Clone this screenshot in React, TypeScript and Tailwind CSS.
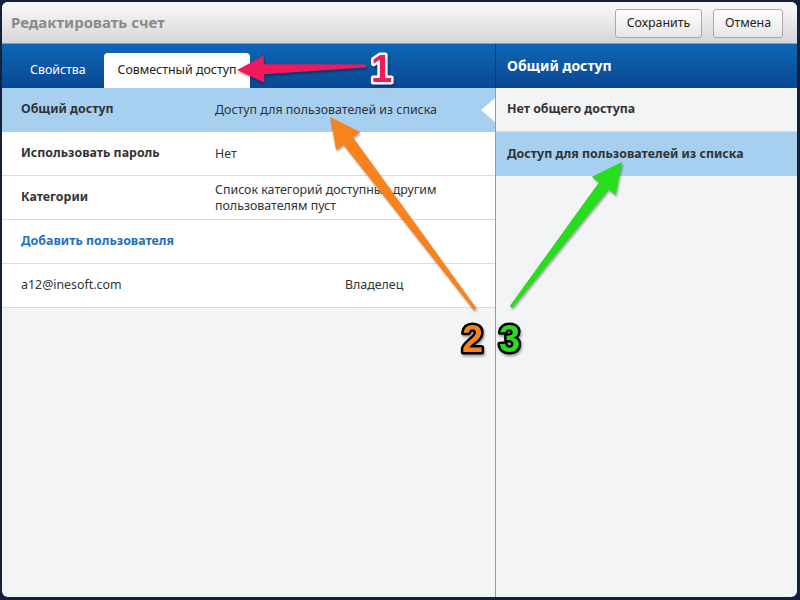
import React from 'react';

type Pt = [number, number];

// tapered annotation arrow: thin tail, wide head
function arrowPoints(tip: Pt, tail: Pt, headLen: number, headW: number, neckW: number, tailW: number) {
  const dx = tail[0] - tip[0];
  const dy = tail[1] - tip[1];
  const len = Math.hypot(dx, dy);
  const ux = dx / len;
  const uy = dy / len;
  const nx = -uy;
  const ny = ux;
  const bx = tip[0] + ux * headLen;
  const by = tip[1] + uy * headLen;
  const pts: Pt[] = [
    tip,
    [bx + nx * headW / 2, by + ny * headW / 2],
    [bx + nx * neckW / 2, by + ny * neckW / 2],
    [tail[0] + nx * tailW / 2, tail[1] + ny * tailW / 2],
    [tail[0] - nx * tailW / 2, tail[1] - ny * tailW / 2],
    [bx - nx * neckW / 2, by - ny * neckW / 2],
    [bx - nx * headW / 2, by - ny * headW / 2],
  ];
  return pts.map((p) => p.join(',')).join(' ');
}

const leftRows = [
  { label: 'Общий доступ', value: 'Доступ для пользователей из списка', active: true },
  { label: 'Использовать пароль', value: 'Нет' },
  { label: 'Категории', value: 'Список категорий доступных другим пользователям пуст' },
];

export default function App() {
  return (
    <div className="relative w-[800px] h-[600px] bg-[#13223a] pt-[2px] pl-[2px] pr-[3px] pb-[3px] overflow-hidden" style={{ fontFamily: '"Noto Sans", "Open Sans", sans-serif' }}>
      <div className="flex flex-col h-full rounded-[6px] overflow-hidden bg-[#f3f4f6]">
        {/* title bar */}
        <div className="h-[42px] flex items-center justify-between pl-[9px] pr-[14px] bg-gradient-to-b from-[#fbfbfb] to-[#d6d6d8] border-b border-[#9a9ea4]">
          <div className="text-[15px] font-bold text-[#8a8a8a]">Редактировать счет</div>
          <div className="flex gap-[11px] pt-[1px]">
            <button className="h-[29px] w-[87px] text-[12.4px] text-[#222] rounded-[3px] border border-[#a9a9a9] bg-gradient-to-b from-white to-[#e6e6e6]">Сохранить</button>
            <button className="h-[29px] w-[70px] text-[12.4px] text-[#222] rounded-[3px] border border-[#a9a9a9] bg-gradient-to-b from-white to-[#e6e6e6]">Отмена</button>
          </div>
        </div>

        {/* blue header */}
        <div className="h-[44px] flex bg-gradient-to-b from-[#0e66b6] to-[#0a4893]">
          <div className="w-[493px] flex items-end pl-[28px]">
            <div className="h-[35px] w-[74px] flex items-center text-[12.4px] text-white">Свойства</div>
            <div className="h-[35px] w-[146px] flex items-center justify-center rounded-t-[4px] bg-white text-[12.4px] text-[#222]">Совместный доступ</div>
          </div>
          <div className="w-px bg-[#0a3a72]" />
          <div className="flex-1 flex items-center pl-[11px] pb-[2px] text-[14px] font-bold text-white">Общий доступ</div>
        </div>

        <div className="flex-1 flex">
          {/* left panel */}
          <div className="w-[493px] flex flex-col">
            {leftRows.map((r) => (
              <div key={r.label} className={`relative h-[44px] flex items-center border-b ${r.active ? 'bg-[#a6cff0] border-[#a6cff0]' : 'bg-white border-[#dcdcdc]'}`}>
                <div className="w-[213px] pl-[19px] text-[12.4px] font-bold text-[#333]">{r.label}</div>
                <div className="w-[236px] text-[12.4px] leading-[16px] text-[#333]">{r.value}</div>
                {r.active && (
                  <div className="absolute right-0 top-[10px] w-0 h-0 border-y-[12px] border-y-transparent border-r-[14px] border-r-white" />
                )}
              </div>
            ))}
            <div className="h-[44px] flex items-center pl-[19px] bg-white border-b border-[#dcdcdc] text-[12.4px] font-bold text-[#1f6fbf]">Добавить пользователя</div>
            <div className="h-[44px] flex items-center bg-white border-b border-[#dcdcdc] text-[12.4px] text-[#333]">
              <div className="w-[343px] pl-[19px]">a12@inesoft.com</div>
              <div>Владелец</div>
            </div>
          </div>
          <div className="w-px bg-[#9a9a9a]" />
          {/* right panel */}
          <div className="flex-1 flex flex-col">
            <div className="h-[44px] flex items-center pl-[11px] border-b border-[#dcdcdc] text-[12.4px] font-bold text-[#333]">Нет общего доступа</div>
            <div className="h-[44px] flex items-center pl-[11px] bg-[#a6cff0] text-[12.4px] font-bold text-[#333]">Доступ для пользователей из списка</div>
          </div>
        </div>
      </div>

      {/* annotations */}
      <svg className="absolute inset-0 pointer-events-none" width="800" height="600" style={{ filter: 'drop-shadow(1px 2px 1px rgba(0,0,0,0.35))' }}>
        <polygon points={arrowPoints([237, 70], [366, 66], 27, 27, 10, 3)} fill="#f2185c" />
        <polygon points={arrowPoints([330, 117], [475, 309], 30, 30, 12, 3)} fill="#f8821c" />
        <polygon points={arrowPoints([622, 162], [511, 307], 30, 30, 12, 3)} fill="#26de1c" />
        <g fontFamily='"Liberation Sans", Arial, sans-serif' fontWeight="bold" fontSize="38" style={{ paintOrder: 'stroke' }} strokeLinejoin="round">
          <text x="371" y="82" fill="#f2185c" stroke="white" strokeWidth="5">1</text>
          <text x="462" y="352" fill="#f8821c" stroke="black" strokeWidth="5">2</text>
          <text x="499" y="352" fill="#26de1c" stroke="black" strokeWidth="5">3</text>
        </g>
      </svg>
    </div>
  );
}
